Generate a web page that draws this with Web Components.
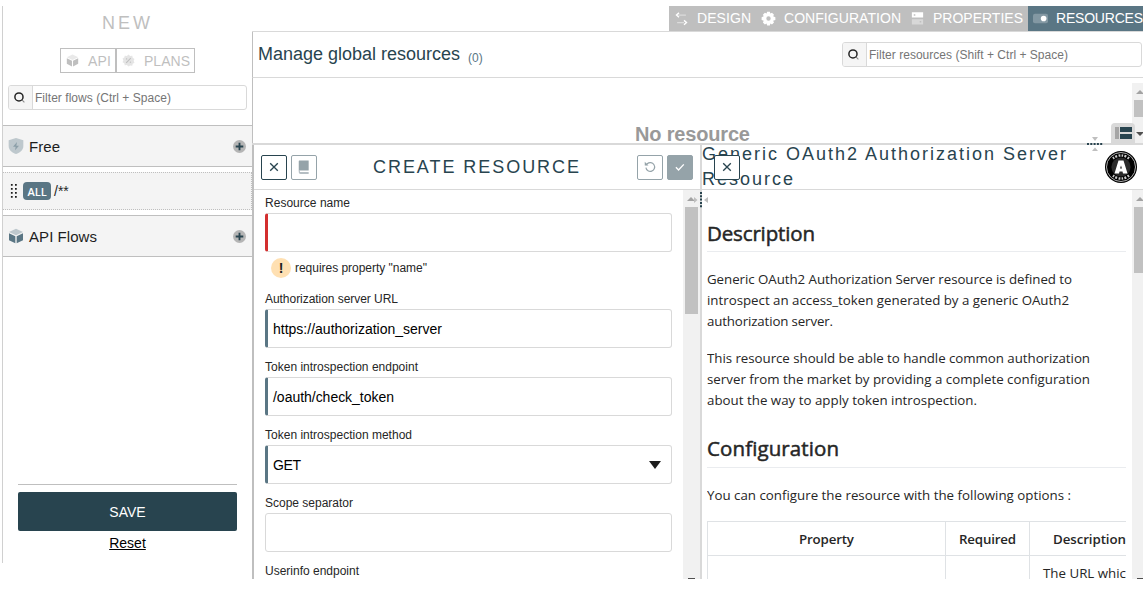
<!DOCTYPE html>
<html lang="en">
<head>
<meta charset="utf-8">
<title>Policy Studio</title>
<style>
html,body{margin:0;height:589px;overflow:hidden;background:#fff}
body{font:14px/1.2 "Liberation Sans",Arial,sans-serif;color:#262626}
</style>
</head>
<body>
<studio-app></studio-app>
<script>
const define = (name, html, init) => customElements.define(name, class extends HTMLElement {
  connectedCallback() {
    if (this.shadowRoot) return;
    const t = document.createElement('template');
    t.innerHTML = '<style>*{box-sizing:border-box}:host{box-sizing:border-box}</style>' +
      (typeof html === 'function' ? html(this) : html);
    this.attachShadow({mode: 'open'}).append(t.content.cloneNode(true));
    if (init) init(this);
  }
});

const ICONS = {
  cube: '<path opacity=".35" d="M12 1 22.500 6 12 11 1.500 6z"/><path d="M1.500 8 11 12.400V23l-9.500-4.800zM22.500 8 13 12.400V23l9.500-4.800z"/>',
  plan: '<path opacity=".4" d="m12 1 3 2.600 3.900-.5.9 3.900 3.200 2-1.500 3.500 1.500 3.500-3.200 2-.9 3.900-3.900-.5L12 23l-3-2.600-3.900.5-.9-3.900-3.200-2L2.500 12 1 8.500l3.200-2 .9-3.400 3.900.5z"/><path d="m15.500 7 1.300 1.300-8.300 8.700L7 15.500z"/><circle cx="8.500" cy="9" r="1.300"/><circle cx="15.500" cy="15" r="1.300"/>',
  shield: '<path opacity=".35" d="M12 0 23 3.500v8.500c0 6-5 10-11 12C6 22 1 18 1 12V3.500z"/><path opacity=".5" d="m13.500 6-6 7h4l-1 5.500 6-7h-4z"/>',
  search: '<circle cx="11" cy="11" r="7.500" fill="none" stroke="currentColor" stroke-width="2.800"/><path d="m17 17 4 4" stroke="currentColor" stroke-width="2" opacity=".5"/>',
  plus: '<circle cx="12" cy="12" r="12" fill="#b5b5b5"/><path fill="#28444f" d="M10.300 5h3.400v5.300H19v3.400h-5.300V19h-3.400v-5.300H5v-3.400h5.300z"/>',
  drag: '<g fill="#1d1d1d"><path d="M5 0h3v3H5zM5 6.800h3v3H5zM5 13.700h3v3H5zM5 20.500h3v3H5zM12 0h3v3h-3zM12 6.800h3v3h-3zM12 13.700h3v3h-3zM12 20.500h3v3h-3z"/></g>',
  arrows: '<g fill="none" stroke="currentColor" stroke-width="2.200"><path opacity=".45" d="M7 6.500h12M5 18.500h11"/><path d="m8 3-4 3.500L8 10M16 15l4 3.500-4 3.500"/></g>',
  gear: '<path fill-rule="evenodd" d="M9.800 1h4.400l.7 3 2.700-1.400 3.200 3.200L19.400 8.500l3.600 1.300v4.400l-3.600 1.300 1.400 2.700-3.200 3.200-2.700-1.400-.7 3H9.800l-.9-3-2.700 1.400L3 18.200l1.400-2.700L1 14.200V9.800l3.400-1.300L3 5.800l3.200-3.200L8.900 4zM12 8.500a3.500 3.500 0 1 0 0 7 3.500 3.500 0 0 0 0-7"/>',
  server: '<path fill-rule="evenodd" d="M3 2h18v8.500H3zM6 5v2.500h2.500V5z"/><path opacity=".4" fill-rule="evenodd" d="M3 13h18v8.500H3zm12.500 3v2.500H18V16z"/>',
  toggle: '<rect opacity=".25" x="0" y="4.500" width="24" height="15" rx="3"/><circle cx="17" cy="12" r="4.500"/>',
  close: '<path d="m5.500 5.500 13 13m0-13-13 13" stroke="currentColor" stroke-width="2.300"/>',
  book: '<path d="M4 1h16v17H5.500a3 3 0 0 0-2.500.8V2a1 1 0 0 1 1-1z"/><path opacity=".7" d="M3 19h2v1.500h15V24H6a3 3 0 0 1-3-3z"/>',
  undo: '<path fill="none" stroke="currentColor" stroke-width="2" d="M5 13a7.500 7.500 0 1 0 2.300-6.500L4.500 8.500"/><path d="M3 3v6.500h6.500z"/>',
  check: '<path fill="none" stroke="currentColor" stroke-width="2.400" d="m5 12.500 4.500 4.500L18.500 7.500"/>'
};
define('ui-icon', el => `<style>:host{display:inline-flex;flex:none;width:16px;height:16px}svg{width:100%;height:100%;fill:currentColor}</style><svg viewBox="0 0 24 24">${ICONS[el.getAttribute('name')]}</svg>`);

define('search-box', el => `<style>
:host{display:flex;flex:none;height:25px;border:1px solid #d9d9d9;border-radius:3px;font-size:12px;color:#757575;background:#fff;overflow:hidden}
.i{width:24px;background:#f5f5f5;border-right:1px solid #d9d9d9;display:flex;align-items:center;justify-content:center;color:#262626}
.t{padding:1px 2px 0;line-height:23px;white-space:nowrap}
ui-icon{width:13px;height:13px;margin-right:2px}</style><div class="i"><ui-icon name="search"></ui-icon></div><div class="t"><slot></slot></div>`);

define('icon-button', el => `<style>
:host{display:flex;width:26px;height:25px;border:1px solid;border-radius:2px;align-items:center;justify-content:center;color:#95a3a9;background:#fff;flex:none}
:host([dark]){color:#28444f}
:host([filled]){background:#95a3a9;border-color:#95a3a9}
:host([filled]) ui-icon{color:#fff}
ui-icon{width:14px;height:14px;margin-bottom:1px}</style><ui-icon name="${el.getAttribute('icon')}"></ui-icon>`);

define('flow-group', el => `<style>
:host{display:flex;height:42px;align-items:center;border:1px solid #bfbfbf;border-width:1px 0;background:#f4f4f4;padding:0 6px 0 5px;font-size:15px;color:#1d1d1d}
.t{flex:1;padding:2px 0 0 5px}.a{color:#5a7684}.p{width:13px;height:13px}</style>
<ui-icon class="a" name="${el.getAttribute('icon')}"></ui-icon><div class="t"><slot></slot></div><ui-icon class="p" name="plus"></ui-icon>`);

define('scroll-bar', el => `<style>
:host{display:block;position:relative;background:#f1f1f1;overflow:hidden}
.th{position:absolute;left:2px;width:13px;background:#c1c1c1;top:${el.getAttribute('top')}px;height:${el.getAttribute('size')}px}
.up{position:absolute;left:4px;top:${el.getAttribute('arrow')}px;border:4px solid transparent;border-top:0;border-bottom:4px solid #a3a3a3}
.dn{position:absolute;left:5px;bottom:0;width:7px;height:1px;background:#505050}
</style><i class="up"></i><i class="th"></i>${el.hasAttribute('nodown') ? '' : '<i class="dn"></i>'}`);

define('studio-sidebar', `<style>
:host{display:flex;flex-direction:column;height:557px;margin:6px 0 0 2px;width:250px;border-left:1px solid #d0d0d0}
h1{margin:7px 0 0;font-size:18px;line-height:20px;font-weight:400;color:#bfbfbf;padding-left:99px}
.b{display:flex;padding:15px 0 0 57px;color:#bfbfbf}
.b div{display:flex;align-items:center;height:25px;border:1px solid #bfbfbf;line-height:25px}
.b div:first-child{width:56px;padding-left:5px}.b div+div{width:79px;padding-left:5px}
.b ui-icon{width:13px;height:13px;margin-right:1px}.b text-run{margin-left:8px;padding-top:1px}
search-box{margin:12px 5px 15px}
.row{display:flex;align-items:center;height:38px;margin:5px 0;border:1px dotted #bfbfbf;border-left:0;background:#f4f4f4;padding-left:5px}
.row ui-icon{width:14px;height:14px;margin-right:1px}
.tag{width:28px;height:18px;background:#5a7684;color:#fff;border-radius:4px;font:600 11px/19px "Open Sans",sans-serif;text-align:center;margin-right:3px}
.foot{margin:auto 15px 0;padding-bottom:11px;border-top:1px solid #bfbfbf;padding-top:7px;text-align:center}
.save{height:39px;background:#28444f;color:#fff;border-radius:2px;line-height:40px}
.r{height:25px;line-height:25px;text-decoration:underline;color:#000;margin-bottom:-4px}
</style>
<h1><text-run w="48">NEW</text-run></h1>
<div class="b"><div><ui-icon name="cube"></ui-icon><text-run w="23">API</text-run></div><div><ui-icon name="plan"></ui-icon><text-run w="46">PLANS</text-run></div></div>
<search-box><text-run w="136">Filter flows (Ctrl + Space)</text-run></search-box>
<flow-group icon="shield"><text-run w="31">Free</text-run></flow-group>
<div class="row"><ui-icon name="drag"></ui-icon><div class="tag">ALL</div><span>/**</span></div>
<flow-group icon="cube"><text-run w="68">API Flows</text-run></flow-group>
<div class="foot"><div class="save">SAVE</div><div class="r">Reset</div></div>`);

define('tab-item', el => `<style>
:host{display:flex;height:25px;align-items:center;background:#bfbfbf;color:#fff;padding-left:5px;white-space:nowrap;flex:none}
:host([active]){background:#5a7684}ui-icon{width:15px;height:15px;margin-right:8px}</style><ui-icon name="${el.getAttribute('icon')}"></ui-icon><slot></slot>`);

define('studio-top', `<style>
:host{display:flex;flex-direction:column;flex:none;height:143px;padding-top:6px}
nav{display:flex;flex:none;height:26px;border-bottom:1px solid #d9d9d9;padding-left:417px;overflow:hidden}
.h{display:flex;flex:none;height:46px;border-bottom:1px solid #d9d9d9;border-left:1px solid #bfbfbf;padding-left:5px;color:#28444f;font-size:18px;line-height:44px}
small{font-size:12px;line-height:52px;color:#5a7684;padding-left:8px;flex:1}
search-box{width:300px;margin:10px 1px 0 0}
.c{flex:1;min-height:0;display:flex;border-left:1px solid #bfbfbf}
.n{flex:1;padding:44px 0 0 382px;height:65px;font-size:20px;line-height:24px;font-weight:700;color:#999}
scroll-bar{width:11px;margin-top:5px}
</style>
<nav><tab-item icon="arrows" style="width:87px"><text-run w="54">DESIGN</text-run></tab-item><tab-item icon="gear" style="width:149px"><text-run w="117">CONFIGURATION</text-run></tab-item><tab-item icon="server" style="width:123px"><text-run w="90">PROPERTIES</text-run></tab-item><tab-item icon="toggle" active style="width:115px"><text-run w="87">RESOURCES</text-run></tab-item></nav>
<div class="h"><text-run w="202">Manage global resources</text-run><small>(0)</small><search-box><text-run w="199">Filter resources (Shift + Ctrl + Space)</text-run></search-box></div>
<div class="c"><div class="n"><text-run w="115">No resource</text-run></div><scroll-bar nodown top="17" size="17" arrow="7"></scroll-bar></div>`);

define('form-field', el => `<style>
:host{display:block;margin-bottom:12px;font-size:12px;color:#262626}
.l{height:17px;line-height:15px}
.box{height:39px;border:1px solid #d9d9d9;border-radius:3px;font-size:14px;line-height:38px;padding:0 7px;color:#000;display:flex;justify-content:space-between;align-items:center}
.box.k{border-left:3px solid ${el.getAttribute('mark')};padding-left:5px}
.s{border:6px solid transparent;border-top:8px solid #1d1d1d;border-bottom:0;margin-right:3px}
.e{display:flex;align-items:center;height:20px;margin:6px 0 14px 6px}
.e b{width:20px;height:20px;border-radius:50%;background:#ffe0b2;text-align:center;font:700 14px/20px "Liberation Sans",sans-serif;color:#1d1d1d;margin-right:4px}
</style><div class="l"><text-run w="${el.getAttribute('w')}">${el.getAttribute('label')}</text-run></div>
<div class="box ${el.hasAttribute('mark') ? 'k' : ''}"><slot></slot>${el.hasAttribute('select') ? '<i class="s"></i>' : ''}</div>
${el.hasAttribute('error') ? `<div class="e"><b>!</b><text-run w="132">${el.getAttribute('error')}</text-run></div>` : ''}`);

define('resource-form', `<style>
:host{display:flex;flex-direction:column;flex:none;width:450px;border-left:2px solid #bfbfbf;border-right:2px solid #d9d9d9}
header{height:45px;flex:none;border-bottom:1px solid #d9d9d9;display:flex;padding:10px 7px 0;gap:4px}
.t{flex:1;font-size:18px;line-height:24px;color:#28444f;padding-left:52px}
.m{display:flex;flex:1;min-height:0}.f{width:429px;padding:6px 11px 0;overflow:hidden}scroll-bar{width:17px}
form-field:first-child{margin-bottom:0}
</style>
<header><icon-button dark icon="close"></icon-button><icon-button icon="book"></icon-button><div class="t"><text-run w="206">CREATE RESOURCE</text-run></div><icon-button icon="undo"></icon-button><icon-button filled icon="check"></icon-button></header>
<div class="m"><div class="f">
<form-field label="Resource name" w="85" mark="#d32f2f" error="requires property &quot;name&quot;"></form-field>
<form-field label="Authorization server URL" w="133" mark="#5a7684"><text-run w="169">https://authorization_server</text-run></form-field>
<form-field label="Token introspection endpoint" w="153" mark="#5a7684"><text-run w="121">/oauth/check_token</text-run></form-field>
<form-field label="Token introspection method" w="147" mark="#5a7684" select><text-run w="28">GET</text-run></form-field>
<form-field label="Scope separator" w="88"></form-field>
<form-field label="Userinfo endpoint" w="94"></form-field>
</div><scroll-bar top="17" size="107" arrow="7"></scroll-bar></div>`);

define('resource-doc', `<style>
:host{display:flex;flex-direction:column;flex:1;min-width:0;position:relative}
header{height:45px;flex:none;border-bottom:1px solid #d9d9d9;color:#28444f;font-size:18px;line-height:25px;display:flex;justify-content:space-between}
.t{margin-top:-3px;height:48px;white-space:nowrap}
.t div{height:25px}
.x{position:absolute;left:12px;top:10px}
.logo{width:32px;height:32px;margin:6px 6px 0 0;flex:none}
.m{display:flex;flex:1;min-height:0;justify-content:space-between}
article{width:419px;margin-left:5px;overflow:hidden;white-space:nowrap;font:13.300px/21px "Open Sans",sans-serif;color:#262626}
h2{margin:0;font-size:20.500px;line-height:27px;font-weight:400;-webkit-text-stroke:.5px #262626;border-bottom:1px solid #eaecef;height:32px}
p{margin:0 0 16px}p text-run{display:table}
scroll-bar{width:11px}
.tb{display:grid;grid-template-columns:238px 84px 140px;border-left:1px solid #dfe2e5}
.tb div{border:1px solid #dfe2e5;border-width:1px 1px 0 0;height:34px;line-height:35px;text-align:center;font-weight:600}
.tb .l{font-weight:400;text-align:left;padding-left:13px}
</style>
<header><div class="t"><div><text-run w="364">Generic OAuth2 Authorization Server</text-run></div><div><text-run w="91">Resource</text-run></div></div>
<svg class="logo" viewBox="0 0 32 32"><circle cx="16" cy="16" r="16"/><circle cx="16" cy="16" r="14.500" fill="none" stroke="#ddd" stroke-width=".8"/><path fill="none" stroke="#ccc" stroke-width="2.400" stroke-dasharray="1.500 1.300 2 1.500 1.800 1.200" d="M8 7.500a12 12 0 0 1 16 0M8 24.500a12 12 0 0 0 16 0"/><circle cx="16" cy="16" r="9.600" fill="#2a2a2a"/><path fill="#fff" fill-rule="evenodd" d="M13.500 9.500h5l4 13h-4.500l-.5-2h-3l-.5 2H9.500zm2.500 5-1 3h2z"/></svg></header>
<icon-button class="x" dark icon="close"></icon-button>
<div class="m"><article>
<h2 style="margin-top:30px"><text-run w="108">Description</text-run></h2>
<p style="margin-top:17px"><text-run w="365">Generic OAuth2 Authorization Server resource is defined to</text-run><text-run w="362">introspect an access_token generated by a generic OAuth2</text-run><text-run w="126">authorization server.</text-run></p>
<p><text-run w="383">This resource should be able to handle common authorization</text-run><text-run w="383">server from the market by providing a complete configuration</text-run><text-run w="270">about the way to apply token introspection.</text-run></p>
<h2 style="margin-top:24px;height:33px"><text-run w="132">Configuration</text-run></h2>
<p style="margin:17px 0 15px"><text-run w="364">You can configure the resource with the following options :</text-run></p>
<div class="tb"><div><text-run w="55">Property</text-run></div><div><text-run w="57">Required</text-run></div><div class="l" style="font-weight:600;padding-left:23px"><text-run w="73">Description</text-run></div><div></div><div></div><div class="l"><text-run w="83">The URL whic</text-run></div></div>
</article><scroll-bar top="17" size="66" arrow="7"></scroll-bar></div>`);

define('split-handle', `<style>:host{position:absolute;width:16px;height:16px}svg{display:block;overflow:visible}:host([vertical]) svg{transform:rotate(90deg)}</style>
<svg width="16" height="16"><path fill="#bfbfbf" d="M5 1h6L8 5zM5 15h6L8 11.500z"/><path stroke="#28444f" stroke-width="2" stroke-dasharray="2 1.300" d="M0 8h16"/></svg>`);

define('view-toggle', `<style>:host{position:absolute;width:24px;height:20px;background:#d9d9d9;border-radius:4px 4px 0 0}svg{display:block}</style>
<svg width="24" height="20"><path fill="#a5a5a5" d="M4 4h4v12H4z"/><path fill="#28444f" d="M9 4h12v5H9zM9 11h12v5H9z"/></svg>`);

define('studio-app', `<style>
:host{display:grid;grid-template-columns:252px 1fr;height:579px;width:1143px;position:relative;overflow:hidden}
main{display:flex;flex-direction:column;min-width:0;height:579px}
.low{display:flex;flex:1;min-height:0;border-top:2px solid #d9d9d9}
.s1{left:1087px;top:136px}.s2{left:693px;top:192px}view-toggle{left:1111px;top:123px}
.d{position:absolute;left:1136px;top:132px;border:4px solid transparent;border-top-color:#505050;border-bottom:0}
</style>
<studio-sidebar></studio-sidebar><main><studio-top></studio-top><div class="low"><resource-form></resource-form><resource-doc></resource-doc></div></main>
<split-handle class="s1"></split-handle><split-handle class="s2" vertical></split-handle><view-toggle></view-toggle><i class="d"></i>`);

// Inline run of text tracked so that its glyphs span the width given in "w".
define('text-run', '<style>:host{display:inline-block;white-space:pre;flex:none}</style><slot></slot>', el => {
  const n = el.textContent.length, w = +el.getAttribute('w');
  const natural = el.getBoundingClientRect().width;
  const ls = (w - natural) / (n - 1);
  el.style.letterSpacing = ls + 'px';
  el.style.marginRight = -ls + 'px';
});
</script>
</body>
</html>
